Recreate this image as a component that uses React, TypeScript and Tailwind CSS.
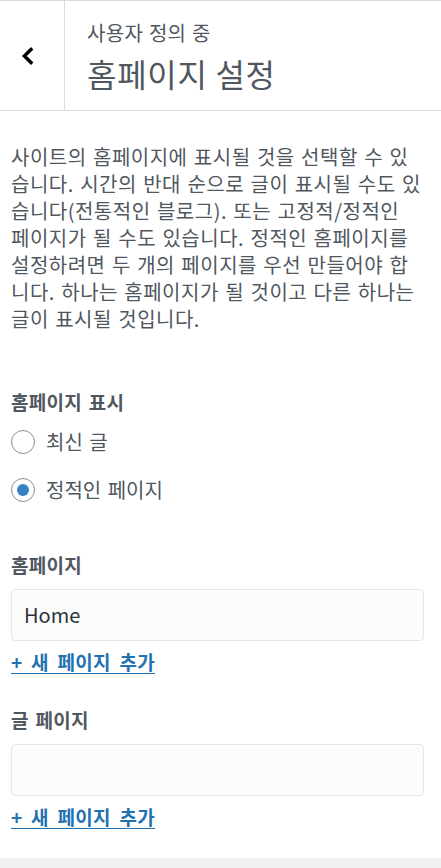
import React from 'react'

const font = { fontFamily: '"Noto Sans CJK KR", "Noto Sans", sans-serif' }

const Radio = ({ label, checked }: { label: string; checked?: boolean }) => (
  <label className="flex items-center gap-[11px] text-[20px] leading-[27px] text-[#50575e] [word-spacing:2px]">
    <span className="flex h-6 w-6 items-center justify-center rounded-full border border-[#8c8f94] bg-white">
      {checked && <span className="h-3 w-3 rounded-full bg-[#3582c4]" />}
    </span>
    {label}
  </label>
)

const AddLink = () => (
  <a
    href="#"
    className="mt-[9px] self-start text-[19px] font-bold leading-6 tracking-[0.3px] text-[#2271b1] underline underline-offset-[3px] [word-spacing:4px]"
  >
    + 새 페이지 추가
  </a>
)

const PageSelect = ({ label, value }: { label: string; value?: string }) => (
  <div className="flex flex-col">
    <div className="text-[19px] font-bold leading-6 tracking-[0.3px] text-[#50575e] [word-spacing:2px]">{label}</div>
    <div className="mt-3 flex h-[52px] items-center rounded-[4px] border border-[#e6e6e6] bg-[#fcfcfc] pl-[12px] text-[20px] text-[#2c3338]">
      {value}
    </div>
    <AddLink />
  </div>
)

export default function App() {
  return (
    <div className="min-h-screen bg-[#f0f0f1]" style={font}>
      <div className="bg-white pb-[29px]">
        <header className="flex h-[111px] border-y border-[#dcdcde]">
          <button className="flex w-[65px] items-center border-r border-[#dcdcde] pl-[22px]">
            <svg width="12" height="18" viewBox="0 0 12 18" fill="none">
              <path d="M10.2 1.3 2.4 9l7.8 7.7" stroke="#000" strokeWidth="3.4" />
            </svg>
          </button>
          <div className="flex flex-col pl-[22px] pt-[20px]">
            <span className="text-[20px] leading-6 tracking-[0.3px] text-[#50575e] [word-spacing:1px]">사용자 정의 중</span>
            <h1 className="mt-2 text-[32px] leading-10 tracking-[0.7px] text-[#50575e]">홈페이지 설정</h1>
          </div>
        </header>

        <div className="pl-[11px] pr-[17px] pt-[32px]">
          <p className="text-[20px] leading-[27px] tracking-[0.5px] text-[#50575e] [word-spacing:1.4px]">
            사이트의 홈페이지에 표시될 것을 선택할 수 있습니다. 시간의 반대 순으로 글이 표시될 수도 있습니다(전통적인 블로그). 또는 고정적/정적인 페이지가 될 수도 있습니다. 정적인 홈페이지를 설정하려면 두 개의 페이지를 우선 만들어야 합니다. 하나는 홈페이지가 될 것이고 다른 하나는 글이 표시될 것입니다.
          </p>

          <div className="mt-[58px]">
            <div className="text-[19px] font-bold leading-6 tracking-[0.3px] text-[#50575e] [word-spacing:2px]">홈페이지 표시</div>
            <div className="mt-[14px] flex flex-col gap-[21px]">
              <Radio label="최신 글" />
              <Radio label="정적인 페이지" checked />
            </div>
          </div>

          <div className="mt-[50px] flex flex-col gap-[34px]">
            <PageSelect label="홈페이지" value="Home" />
            <PageSelect label="글 페이지" />
          </div>
        </div>
      </div>
    </div>
  )
}
